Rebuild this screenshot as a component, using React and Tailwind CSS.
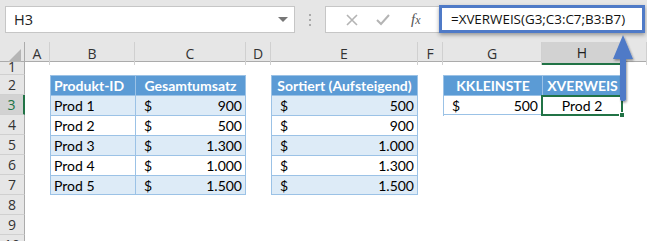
import React from "react";

const cols = ["A", "B", "C", "D", "E", "F", "G", "H", ""];
const gridCols = "grid-cols-[25px_25px_85px_111px_25px_147px_25px_99px_81px_1fr]";

const sales = [
  ["Prod 1", "900"],
  ["Prod 2", "500"],
  ["Prod 3", "1.300"],
  ["Prod 4", "1.000"],
  ["Prod 5", "1.500"],
];
const sorted = ["500", "900", "1.000", "1.300", "1.500"];

const Cell = ({ children, className = "" }) => (
  <div className={`h-[20px] flex items-center ${className}`}>{children}</div>
);

const Money = ({ value, band, last }) => (
  <div
    className={`h-[20px] flex items-center justify-between pl-[8px] pr-[3px] border-[#9bc2e6] border-t border-r ${
      last ? "border-b" : ""
    } ${band ? "bg-[#ddebf7]" : "bg-white"}`}
  >
    <span>$</span>
    <span>{value}</span>
  </div>
);

export default function App() {
  return (
    <div className="relative w-[647px] h-[241px] overflow-hidden bg-white text-[14px] text-black font-['Lato',sans-serif]">
      {/* top bar */}
      <div className="h-[42px] bg-[#e6e6e6] flex items-start pt-[6px] pl-[5px]">
        <div className="w-[290px] h-[27px] bg-white border border-[#c6c6c6] flex items-center justify-between pl-[8px] pr-[6px] text-[#222]">
          <span className="font-['Open_Sans',sans-serif] text-[14.5px]">H3</span>
          <span className="w-0 h-0 border-l-[5px] border-r-[5px] border-t-[5px] border-l-transparent border-r-transparent border-t-[#777]" />
        </div>
        <div className="w-[30px] h-[27px] flex flex-col items-center justify-center gap-[3px]">
          <span className="w-[2px] h-[2px] bg-[#aaa]" />
          <span className="w-[2px] h-[2px] bg-[#aaa]" />
          <span className="w-[2px] h-[2px] bg-[#aaa]" />
        </div>
        <div className="w-[114px] h-[27px] bg-white border border-[#c6c6c6] border-r-0 flex items-center text-[#a6a6a6]">
          <svg width="14" height="14" viewBox="0 0 14 14" className="ml-[19px]">
            <path d="M2 2 L12 12 M12 2 L2 12" stroke="#b4b4b4" strokeWidth="1.6" />
          </svg>
          <svg width="16" height="14" viewBox="0 0 16 14" className="ml-[16px]">
            <path d="M2 7 L6 11 L14 2" stroke="#b4b4b4" strokeWidth="2" fill="none" />
          </svg>
          <span className="ml-[20px] italic font-['Liberation_Serif',serif] text-[15px] text-[#555]">
            f<span className="text-[12px]">x</span>
          </span>
        </div>
        <div className="w-[206px] h-[28px] -mt-[1px] bg-white border-[3px] border-[#4f7ac7] shadow-[0_2px_4px_rgba(0,0,0,0.35)] flex items-center pl-[9px] font-['Open_Sans',sans-serif] text-[13.4px] text-[#111]">
          =XVERWEIS(G3;C3:C7;B3:B7)
        </div>
      </div>

      {/* column headers */}
      <div className={`grid ${gridCols} h-[20px] bg-[#e6e6e6] border-b border-[#ababab] text-[#333] font-['Open_Sans',sans-serif] text-[14px]`}>
        <div className="relative border-r border-[#ababab]">
          <span className="absolute right-[3px] bottom-[3px] w-0 h-0 [border-bottom:13px_solid_#b5b5b5] [border-left:13px_solid_transparent]" />
        </div>
        {cols.map((c, i) => (
          <div
            key={i}
            className={`flex items-center justify-center border-r border-[#d0d0d0] ${
              c === "H" ? "bg-[#d2d2d2] border-b-2 border-b-[#217346] text-[#1f1f1f]" : ""
            }`}
          >
            {c}
          </div>
        ))}
      </div>

      {/* body */}
      <div className={`grid ${gridCols}`}>
        {/* row headers */}
        <div className="flex flex-col bg-[#e6e6e6] text-[#333] font-['Open_Sans',sans-serif] text-[14px]">
          <div className="h-[13px] border-b border-r border-[#d0d0d0] border-r-[#ababab] flex items-end justify-center leading-none overflow-hidden">1</div>
          {[2, 3, 4, 5, 6, 7, 8, 9, 10].map((n) => (
            <div
              key={n}
              className={`h-[20px] border-b border-[#d0d0d0] flex items-center justify-center ${
                n === 3 ? "bg-[#d2d2d2] border-r-2 border-r-[#217346] text-[#217346]" : "border-r border-r-[#ababab]"
              }`}
            >
              {n}
            </div>
          ))}
        </div>

        <div />

        {/* table B:C */}
        <div className="col-span-2 pt-[13px]">
          <div className="grid grid-cols-[85px_111px]">
            <Cell className="bg-[#5b9bd5] text-white font-bold pl-[3px] border-l border-t border-[#9bc2e6]">Produkt-ID</Cell>
            <Cell className="bg-[#5b9bd5] text-white font-bold justify-center border-l border-t border-r border-[#9bc2e6]">Gesamtumsatz</Cell>
            {sales.map(([p, v], i) => (
              <React.Fragment key={p}>
                <Cell
                  className={`pl-[3px] border-l border-t border-[#9bc2e6] ${i === 4 ? "border-b" : ""} ${
                    i % 2 === 0 ? "bg-[#ddebf7]" : "bg-white"
                  }`}
                >
                  {p}
                </Cell>
                <div className="border-l border-[#9bc2e6]">
                  <Money value={v} band={i % 2 === 0} last={i === 4} />
                </div>
              </React.Fragment>
            ))}
          </div>
        </div>

        <div />

        {/* table E */}
        <div className="pt-[13px]">
          <Cell className="bg-[#5b9bd5] text-white font-bold justify-center border-l border-t border-r border-[#9bc2e6]">
            Sortiert (Aufsteigend)
          </Cell>
          {sorted.map((v, i) => (
            <div key={v} className="border-l border-[#9bc2e6]">
              <Money value={v} band={i % 2 === 0} last={i === 4} />
            </div>
          ))}
        </div>

        <div />

        {/* table G:H */}
        <div className="col-span-2 pt-[13px]">
          <div className="grid grid-cols-[99px_81px]">
            <Cell className="bg-[#5b9bd5] text-white font-bold justify-center border-l border-t border-[#9bc2e6]">KKLEINSTE</Cell>
            <Cell className="bg-[#5b9bd5] text-white font-bold justify-center border-l border-t border-r border-[#9bc2e6]">XVERWEIS</Cell>
            <div className="border-l border-[#9bc2e6]">
              <Money value="500" band={false} last />
            </div>
            <div className="relative h-[21px] -ml-[1px] border-2 border-[#217346] flex items-center justify-center">
              Prod 2
              <span className="absolute -right-[4px] -bottom-[4px] w-[6px] h-[6px] bg-[#217346] border border-white" />
            </div>
          </div>
        </div>

        <div />
      </div>

      {/* arrow */}
      <svg width="30" height="75" viewBox="0 0 30 75" className="absolute left-[609px] top-[33px]">
        <defs>
          <filter id="sh" x="-50%" y="-20%" width="200%" height="140%">
            <feDropShadow dx="1" dy="1.5" stdDeviation="1.2" floodColor="#000" floodOpacity="0.4" />
          </filter>
        </defs>
        <g filter="url(#sh)">
          <path d="M14 2 L24 26 L17 26 L17 66 Q17 68 14 68 Q11 68 11 66 L11 26 L4 26 Z" fill="#4f7ac7" />
        </g>
      </svg>
    </div>
  );
}
